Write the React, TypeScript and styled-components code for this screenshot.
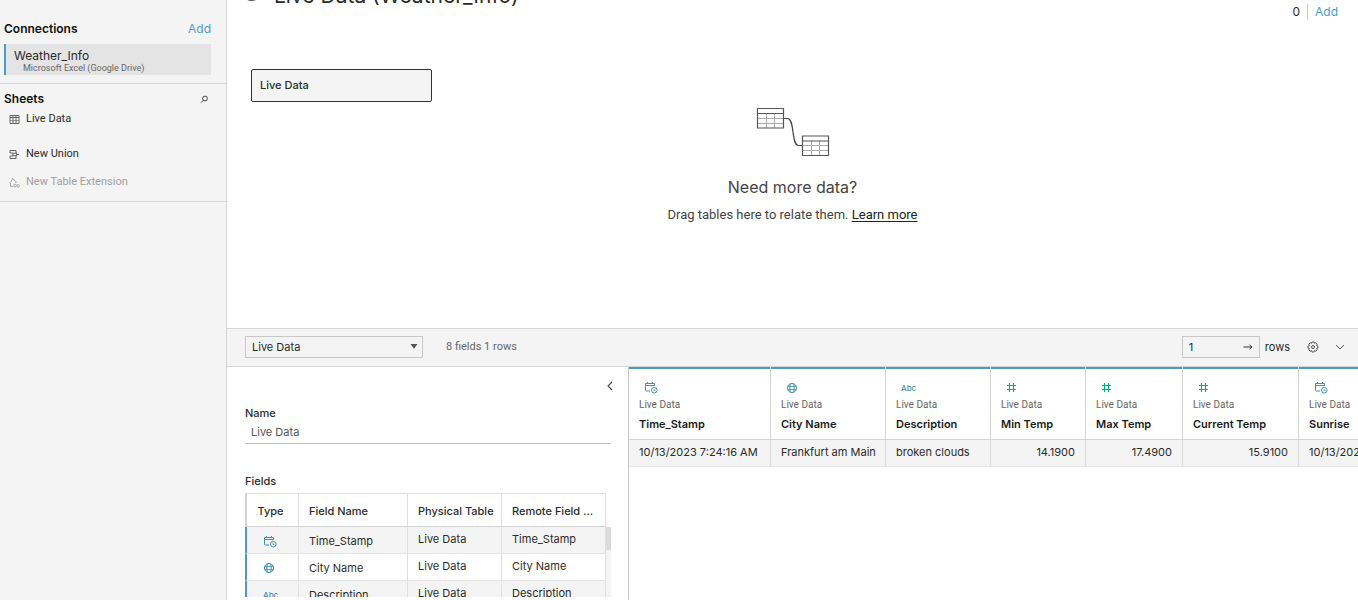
import React from 'react';
import styled, { createGlobalStyle } from 'styled-components';

const ink = '#2b2b2b';
const muted = '#666';
const line = '#d4d4d4';
const blue = '#4590b0';
const accent = '#499ec2';
const green = '#00b180';
const panel = '#f4f4f4';
const narrow = 'Roboto, "Liberation Sans", sans-serif';

const GlobalStyle = createGlobalStyle`
  *, *::before, *::after { box-sizing: border-box; }
  body { margin: 0; background: #fff; color: ${ink}; font: 11px/16px Inter, "Liberation Sans", sans-serif; }
  button, input, select { font: inherit; color: inherit; }
  h1, h2, h3, p, ul { margin: 0; padding: 0; }
`;

const Shell = styled.div`
  display: flex;
  height: 100vh;
  overflow: hidden;
`;

const Sidebar = styled.aside`
  flex: 0 0 227px;
  background: ${panel};
  border-right: 1px solid ${line};
`;

const SidebarSection = styled.section<{ $top: number; $bottom: number }>`
  padding: ${(p) => p.$top}px 15px ${(p) => p.$bottom}px 4px;
  border-bottom: 1px solid ${line};
`;

const SectionHead = styled.div`
  display: flex;
  align-items: center;
  justify-content: space-between;
  height: 16px;
`;

const SectionTitle = styled.h2`
  font-size: 12px;
  line-height: 16px;
  font-weight: 600;
  color: #111;
`;

const PlainButton = styled.button`
  display: inline-flex;
  align-items: center;
  justify-content: center;
  padding: 0;
  border: 0;
  background: none;
  cursor: pointer;
`;

const AddButton = styled(PlainButton)`
  font-size: 12px;
  line-height: 16px;
  color: ${accent};
`;

const SearchButton = styled(PlainButton)`
  width: 14px;
  height: 16px;
`;

const Connection = styled.button`
  display: block;
  width: 100%;
  height: 31px;
  margin-top: 7px;
  padding: 2px 8px 0;
  border: 0;
  border-left: 2px solid ${accent};
  background: #e4e4e4;
  text-align: left;
`;

const ConnectionName = styled.span`
  display: block;
  font-size: 12px;
  line-height: 15px;
`;

const ConnectionKind = styled.span`
  display: block;
  padding-left: 9px;
  font-family: ${narrow};
  font-size: 9px;
  line-height: 11px;
  color: ${muted};
`;

const SheetList = styled.ul`
  display: grid;
  grid-template-rows: 27px 28px 28px;
  padding-top: 4px;
  list-style: none;
`;

const SheetItem = styled.li<{ $drop?: boolean }>`
  padding-top: ${(p) => (p.$drop ? 8 : 0)}px;
`;

const SheetButton = styled(PlainButton)`
  gap: 6px;
  height: 16px;
  padding-left: 5px;
  font-family: ${narrow};
  &:disabled { color: #a0a0a0; cursor: default; }
`;

const Main = styled.main`
  display: flex;
  flex: 1;
  flex-direction: column;
  min-width: 0;
`;

const Canvas = styled.section`
  flex: 0 0 328px;
  overflow: hidden;
`;

const CanvasHeader = styled.header`
  display: flex;
  justify-content: space-between;
  height: 69px;
  padding: 0 20px 0 18px;
`;

const DataSource = styled.div`
  display: flex;
  align-items: center;
  gap: 16px;
  height: 28px;
  margin-top: -18px;
`;

const DataSourceTitle = styled.h1`
  font-size: 21px;
  line-height: 28px;
  font-weight: 400;
  white-space: nowrap;
`;

const Filters = styled.div`
  display: flex;
  align-items: center;
  gap: 7px;
  height: 16px;
  margin-top: 4px;
  font-size: 12px;
`;

const Divider = styled.span`
  width: 1px;
  height: 16px;
  background: #ccc;
`;

const TableNode = styled.button`
  display: block;
  width: 181px;
  height: 33px;
  margin-left: 24px;
  padding: 0 8px 2px;
  border: 1px solid #333;
  border-radius: 2px;
  background: ${panel};
  text-align: left;
  font-weight: 500;
`;

const Hint = styled.div`
  display: flex;
  flex-direction: column;
  align-items: center;
  padding-top: 5px;
  color: #444;
`;

const HintTitle = styled.h2`
  margin-top: 18px;
  font-size: 16px;
  line-height: 24px;
  font-weight: 400;
`;

const HintText = styled.p`
  margin-top: 8px;
  font-family: ${narrow};
  font-size: 13px;
  line-height: 16px;
`;

const HintLink = styled.a`
  color: #222;
  text-decoration: underline;
  text-underline-offset: 2px;
`;

const Toolbar = styled.div`
  display: flex;
  flex: 0 0 39px;
  align-items: center;
  padding: 0 12px 2px 18px;
  background: ${panel};
  border-top: 1px solid ${line};
  border-bottom: 1px solid ${line};
`;

const SelectBox = styled.label`
  display: grid;
  grid-template-columns: 1fr 12px;
  align-items: center;
  width: 178px;
  height: 22px;
  border: 1px solid #c8c8c8;
  svg { grid-area: 1 / 2; pointer-events: none; }
`;

const Select = styled.select`
  grid-area: 1 / 1 / 2 / 3;
  height: 20px;
  padding: 0 6px;
  border: 0;
  appearance: none;
  background: transparent;
`;

const Summary = styled.span`
  margin-left: 23px;
  margin-right: auto;
  font-family: ${narrow};
  color: ${muted};
`;

const RowsField = styled.div`
  display: flex;
  align-items: center;
  width: 78px;
  height: 22px;
  padding: 0 6px;
  border: 1px solid #c8c8c8;
`;

const RowsInput = styled.input`
  flex: 1;
  min-width: 0;
  padding: 0;
  border: 0;
  background: none;
`;

const RowsLabel = styled.label`
  margin: 0 17px 0 5px;
`;

const ToolButtons = styled.div`
  display: flex;
  gap: 15px;
`;

const Workspace = styled.div`
  display: flex;
  flex: 1;
  min-height: 0;
`;

const Details = styled.section`
  display: flex;
  flex: 0 0 402px;
  flex-direction: column;
  padding: 11px 17px 3px 18px;
  border-right: 1px solid #c8c8c8;
`;

const Collapse = styled(PlainButton)`
  align-self: flex-end;
  flex: 0 0 16px;
  width: 8px;
  margin-right: -3px;
`;

const FieldLabel = styled.label`
  margin-top: 11px;
  font-weight: 500;
`;

const NameInput = styled.input`
  flex: 0 0 23px;
  width: 100%;
  min-width: 0;
  padding: 0 6px;
  border: 0;
  border-bottom: 1px solid #c0c0c0;
  color: #555;
`;

const FieldsTitle = styled.h3`
  margin-top: 29px;
  font-size: 11px;
  line-height: 16px;
  font-weight: 500;
`;

const FieldsArea = styled.div`
  display: flex;
  flex: 1;
  min-height: 0;
  margin-top: 4px;
  overflow: hidden;
`;

const FieldsTable = styled.table`
  flex: 1;
  align-self: flex-start;
  width: 361px;
  border-collapse: separate;
  border-spacing: 0;
  table-layout: fixed;
  border-top: 1px solid #e0e0e0;
`;

const HeadCell = styled.th<{ $center?: boolean }>`
  height: 33px;
  padding: 2px 10px 0;
  border-right: 1px solid #e0e0e0;
  border-bottom: 1px solid ${line};
  font-weight: 500;
  text-align: ${(p) => (p.$center ? 'center' : 'left')};
  white-space: nowrap;
  &:first-child { padding: 2px 4px 0 0; border-left: 2px solid ${line}; }
`;

const FieldRow = styled.tr`
  &:nth-child(odd) { background: ${panel}; }
`;

const FieldCell = styled.td<{ $low?: boolean }>`
  height: 27px;
  padding: ${(p) => (p.$low ? 6 : 4)}px 10px 0;
  border-right: 1px solid #e0e0e0;
  border-bottom: 1px solid #e6e6e6;
  vertical-align: top;
  &:first-child { padding-left: 16px; padding-right: 0; border-left: 2px solid ${accent}; }
`;

const TypeSlot = styled.span`
  display: flex;
  align-items: center;
  height: 16px;
`;

const ScrollTrack = styled.div`
  flex: 0 0 5px;
  margin-top: 34px;
  background: #f4f4f4;
`;

const ScrollThumb = styled.div`
  height: 23px;
  background: #dadada;
`;

const GridArea = styled.section`
  flex: 1;
  min-width: 0;
  overflow: hidden;
`;

const DataTable = styled.table`
  width: 812px;
  table-layout: fixed;
  border-collapse: separate;
  border-spacing: 0;
`;

const ColumnHead = styled.th`
  height: 73px;
  padding: 11px 10px 0;
  border-right: 1px solid ${line};
  border-bottom: 1px solid ${line};
  box-shadow: inset 0 2px ${accent};
  text-align: left;
  vertical-align: top;
  font-weight: 600;
  color: #1b1b1b;
  white-space: nowrap;
`;

const ColumnIcon = styled.span`
  display: flex;
  align-items: center;
  height: 19px;
  padding-left: 5px;
`;

const ColumnSource = styled.span`
  display: block;
  font-family: ${narrow};
  font-size: 10px;
  line-height: 15px;
  font-weight: 400;
  color: ${muted};
`;

const ColumnName = styled.span`
  display: block;
  padding-top: 4px;
  line-height: 16px;
`;

const DataCell = styled.td<{ $number?: boolean }>`
  height: 27px;
  padding: 0 10px 2px;
  border-right: 1px solid #dcdcdc;
  border-bottom: 1px solid #e6e6e6;
  background: ${panel};
  white-space: nowrap;
  text-align: ${(p) => (p.$number ? 'right' : 'left')};
`;

const TypeText = styled.span`
  font-size: 8px;
  line-height: 12px;
  font-weight: 500;
  color: ${blue};
`;

type Kind = 'datetime' | 'geo' | 'text' | 'number';

function TypeIcon({ kind }: { kind: Kind }) {
  if (kind === 'text') return <TypeText>Abc</TypeText>;
  if (kind === 'number') {
    return (
      <svg width="11" height="11" viewBox="0 0 11 11" stroke={green} strokeWidth="1.2" fill="none">
        <path d="M3.5 1v9M7.5 1v9M1 3.5h9M1 7.5h9" />
      </svg>
    );
  }
  if (kind === 'geo') {
    return (
      <svg width="12" height="12" viewBox="0 0 12 12" stroke={blue} fill="none">
        <circle cx="6" cy="6" r="4.6" />
        <ellipse cx="6" cy="6" rx="2.2" ry="4.6" />
        <path d="M1.8 4.3h8.4M1.8 7.7h8.4" />
      </svg>
    );
  }
  return (
    <svg width="14" height="13" viewBox="0 0 14 13" stroke={blue} fill="none">
      <path d="M6 10H2.200Q1.500 10 1.500 9.300V2.500H10.500V5M1.500 4.500H10.500M3.500 1v2M8.500 1v2" />
      <circle cx="10.300" cy="9.200" r="2.800" />
      <path d="M10 7.700V9.500H11.600" strokeWidth="0.8" />
    </svg>
  );
}

const fields: { kind: Kind; name: string }[] = [
  { kind: 'datetime', name: 'Time_Stamp' },
  { kind: 'geo', name: 'City Name' },
  { kind: 'text', name: 'Description' },
];

const columns: { kind: Kind; name: string; width: number; value: string }[] = [
  { kind: 'datetime', name: 'Time_Stamp', width: 142, value: '10/13/2023 7:24:16 AM' },
  { kind: 'geo', name: 'City Name', width: 115, value: 'Frankfurt am Main' },
  { kind: 'text', name: 'Description', width: 105, value: 'broken clouds' },
  { kind: 'number', name: 'Min Temp', width: 95, value: '14.1900' },
  { kind: 'number', name: 'Max Temp', width: 97, value: '17.4900' },
  { kind: 'number', name: 'Current Temp', width: 116, value: '15.9100' },
  { kind: 'datetime', name: 'Sunrise', width: 142, value: '10/13/2023' },
];

export default function App() {
  return (
    <>
      <GlobalStyle />
      <Shell>
        <Sidebar>
          <SidebarSection $top={21} $bottom={8}>
            <SectionHead>
              <SectionTitle>Connections</SectionTitle>
              <AddButton>Add</AddButton>
            </SectionHead>
            <Connection>
              <ConnectionName>Weather_Info</ConnectionName>
              <ConnectionKind>Microsoft Excel (Google Drive)</ConnectionKind>
            </Connection>
          </SidebarSection>
          <SidebarSection $top={7} $bottom={7}>
            <SectionHead>
              <SectionTitle>Sheets</SectionTitle>
              <SearchButton aria-label="Search sheets">
                <svg width="9" height="9" viewBox="0 0 9 9" stroke="#444" fill="none">
                  <circle cx="5" cy="3.5" r="2.4" />
                  <path d="M3.3 5.3L1 7.6" />
                </svg>
              </SearchButton>
            </SectionHead>
            <SheetList>
              <SheetItem>
                <SheetButton>
                  <svg width="11" height="11" viewBox="0 0 11 11" stroke="#666" fill="none">
                    <path d="M1 1.5h9v8h-9zM1 3.5h9M4 1.5v8M7 1.5v8" />
                    <path d="M1 6.500h9" strokeOpacity="0.6" />
                  </svg>
                  Live Data
                </SheetButton>
              </SheetItem>
              <SheetItem $drop>
                <SheetButton>
                  <svg width="11" height="11" viewBox="0 0 11 11" stroke="#555" fill="none">
                    <path d="M7 4V1.500H1V4H4M7 7V9.500H1V7H4M4 4.300H7.500V6.700H4ZM7.500 5.500H10" strokeWidth="0.9" />
                  </svg>
                  New Union
                </SheetButton>
              </SheetItem>
              <SheetItem $drop>
                <SheetButton disabled>
                  <svg width="11" height="11" viewBox="0 0 11 11" stroke="#aaa" fill="none">
                    <path d="M4 9.500H1.500V7L1 5.500L2.500 4L3.500 1L5 3L7 4.500V6" />
                    <circle cx="6" cy="8.5" r="1.4" />
                    <circle cx="9.200" cy="8.8" r="1.3" />
                  </svg>
                  New Table Extension
                </SheetButton>
              </SheetItem>
            </SheetList>
          </SidebarSection>
        </Sidebar>

        <Main>
          <Canvas>
            <CanvasHeader>
              <DataSource>
                <svg width="13" height="16" viewBox="0 0 13 16" stroke="#555" fill="none" strokeWidth="1.3">
                  <ellipse cx="6.5" cy="3" rx="4.5" ry="2" />
                  <path d="M2 3v7c0 3 9 3 9 0V3" />
                </svg>
                <DataSourceTitle>Live Data (Weather_Info)</DataSourceTitle>
              </DataSource>
              <Filters>
                <span>0</span>
                <Divider />
                <AddButton>Add</AddButton>
              </Filters>
            </CanvasHeader>
            <TableNode>Live Data</TableNode>
            <Hint>
              <svg width="74" height="50" viewBox="0 0 74 50" fill="none">
                <path d="M2 11.5H27M2 16.5H27M10.5 7V21M18.5 7V21M47 38.5H72M47 43.5H72M55.5 34V48M63.5 34V48" stroke="#aaa" />
                <path d="M1.5 1.5H27.5V21H1.5ZM1.5 6.5H27.5M46.5 29H72.5V48.5H46.5ZM46.5 34H72.5" stroke="#555" strokeWidth="1.2" />
                <path d="M28 11.5H31.5C39 11.5 35 38.5 42.5 38.5H46" stroke="#444" strokeWidth="1.2" />
              </svg>
              <HintTitle>Need more data?</HintTitle>
              <HintText>
                Drag tables here to relate them. <HintLink href="#learn">Learn more</HintLink>
              </HintText>
            </Hint>
          </Canvas>

          <Toolbar>
            <SelectBox>
              <Select aria-label="Table" defaultValue="Live Data">
                <option>Live Data</option>
              </Select>
              <svg width="8" height="5" viewBox="0 0 8 5">
                <path d="M0.5 0h7L4 4.8z" fill="#555" />
              </svg>
            </SelectBox>
            <Summary>8 fields 1 rows</Summary>
            <RowsField>
              <RowsInput id="rows" defaultValue="1" />
              <svg width="10" height="8" viewBox="0 0 10 8" stroke="#333" fill="none">
                <path d="M0.5 4h8M6.5 1.8L9 4L6.5 6.2" />
              </svg>
            </RowsField>
            <RowsLabel htmlFor="rows">rows</RowsLabel>
            <ToolButtons>
              <PlainButton aria-label="Settings">
                <svg width="12" height="12" viewBox="0 0 12 12" stroke="#555" fill="none">
                  <path d="M5 1h2l.4 1.3 1.2-.6 1.5 1.5-.6 1.2L11 5v2l-1.4.5.6 1.3-1.5 1.4-1.3-.6L7 11H5l-.5-1.4-1.3.6-1.4-1.4.6-1.3L1 7V5l1.4-.5-.6-1.3 1.4-1.4 1.3.6z" />
                  <circle cx="6" cy="6" r="1.5" />
                </svg>
              </PlainButton>
              <PlainButton aria-label="Collapse preview">
                <svg width="12" height="8" viewBox="0 0 12 8" stroke="#555" fill="none">
                  <path d="M2 2L6 6L10 2" />
                </svg>
              </PlainButton>
            </ToolButtons>
          </Toolbar>

          <Workspace>
            <Details>
              <Collapse aria-label="Collapse details">
                <svg width="8" height="10" viewBox="0 0 8 10" stroke="#444" fill="none">
                  <path d="M6 1L2 5L6 9" strokeWidth="1.1" />
                </svg>
              </Collapse>
              <FieldLabel htmlFor="table-name">Name</FieldLabel>
              <NameInput id="table-name" defaultValue="Live Data" />
              <FieldsTitle>Fields</FieldsTitle>
              <FieldsArea>
                <FieldsTable>
                  <colgroup>
                    <col style={{ width: 54 }} />
                    <col style={{ width: 109 }} />
                    <col style={{ width: 94 }} />
                    <col style={{ width: 104 }} />
                  </colgroup>
                  <thead>
                    <tr>
                      <HeadCell $center>Type</HeadCell>
                      <HeadCell>Field Name</HeadCell>
                      <HeadCell>Physical Table</HeadCell>
                      <HeadCell>Remote Field ...</HeadCell>
                    </tr>
                  </thead>
                  <tbody>
                    {fields.map((f) => (
                      <FieldRow key={f.name}>
                        <FieldCell $low><TypeSlot><TypeIcon kind={f.kind} /></TypeSlot></FieldCell>
                        <FieldCell $low>{f.name}</FieldCell>
                        <FieldCell>Live Data</FieldCell>
                        <FieldCell>{f.name}</FieldCell>
                      </FieldRow>
                    ))}
                  </tbody>
                </FieldsTable>
                <ScrollTrack><ScrollThumb /></ScrollTrack>
              </FieldsArea>
            </Details>

            <GridArea>
              <DataTable>
                <colgroup>
                  {columns.map((c) => <col key={c.name} style={{ width: c.width }} />)}
                </colgroup>
                <thead>
                  <tr>
                    {columns.map((c) => (
                      <ColumnHead key={c.name}>
                        <ColumnIcon><TypeIcon kind={c.kind} /></ColumnIcon>
                        <ColumnSource>Live Data</ColumnSource>
                        <ColumnName>{c.name}</ColumnName>
                      </ColumnHead>
                    ))}
                  </tr>
                </thead>
                <tbody>
                  <tr>
                    {columns.map((c) => (
                      <DataCell key={c.name} $number={c.kind === 'number'}>{c.value}</DataCell>
                    ))}
                  </tr>
                </tbody>
              </DataTable>
            </GridArea>
          </Workspace>
        </Main>
      </Shell>
    </>
  );
}
